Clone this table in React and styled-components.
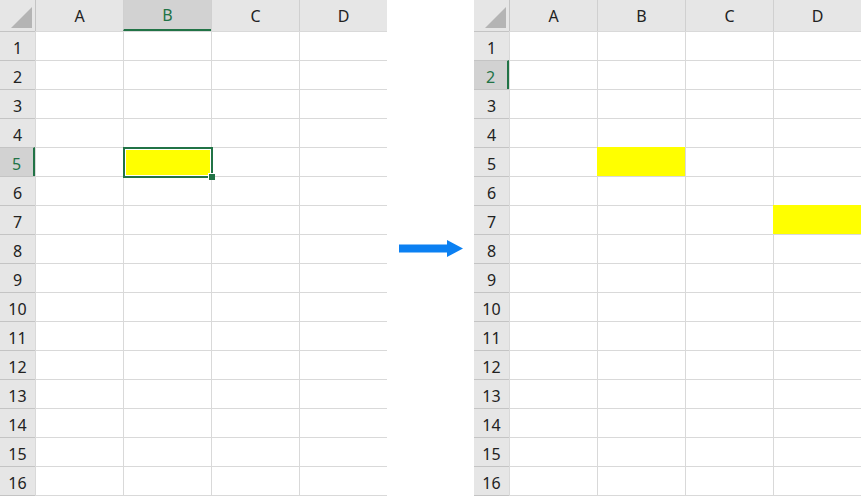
import styled, { createGlobalStyle } from "styled-components";

const Global = createGlobalStyle`
  html, body {
    margin: 0;
    padding: 0;
    background: #fff;
  }
  body {
    font-family: "Segoe UI", "Noto Sans", "Open Sans", sans-serif;
  }
`;

const COLS = ["A", "B", "C", "D"];
const ROWS = Array.from({ length: 16 }, (_, i) => i + 1);

const Page = styled.div`
  display: flex;
  align-items: center;
  width: 861px;
  height: 497px;
  overflow: hidden;
`;

const Sheet = styled.div`
  display: grid;
  grid-template-columns: 35px repeat(4, 88px);
  grid-template-rows: 31px repeat(16, 29px) 1px;
  align-self: flex-start;
  flex-shrink: 0;
`;

const Corner = styled.div`
  position: relative;
  background: #e6e6e6;

  &::after {
    content: "";
    position: absolute;
    right: 3px;
    bottom: 3px;
    width: 21px;
    height: 21px;
    background: #b4b4b4;
    clip-path: polygon(100% 0, 100% 100%, 0 100%);
  }
`;

const ColHead = styled.div`
  box-sizing: border-box;
  display: flex;
  align-items: center;
  justify-content: center;
  font-size: 16px;
  background: ${(p) => (p.$active ? "#d2d2d2" : "#e6e6e6")};
  color: ${(p) => (p.$active ? "#217346" : "#222")};
  border-left: 1px solid ${(p) => (p.$first ? "#c4c4c4" : "#d0d0d0")};
  border-bottom: ${(p) => (p.$active ? "2px solid #217346" : "0")};
`;

const RowHead = styled.div`
  box-sizing: border-box;
  display: flex;
  align-items: center;
  justify-content: center;
  padding-top: 3px;
  font-size: 16px;
  background: ${(p) => (p.$active ? "#d2d2d2" : "#e6e6e6")};
  color: ${(p) => (p.$active ? "#217346" : "#222")};
  border-top: 1px solid #c4c4c4;
  border-right: ${(p) => (p.$active ? "2px solid #217346" : "0")};
`;

const Cell = styled.div`
  position: relative;
  box-sizing: border-box;
  background: ${(p) => (p.$fill ? "#ffff00" : "#fff")};
  border-left: 1px solid ${(p) => (p.$fill ? "#ffff00" : "#d9d9d9")};
  border-top: 1px solid ${(p) => (p.$fill ? "#ffff00" : "#d9d9d9")};
`;

const BottomEdge = styled.div`
  grid-column: 1 / -1;
  background: linear-gradient(to right, #c4c4c4 35px, #d9d9d9 35px);
`;

const Selection = styled.div`
  position: absolute;
  top: -1px;
  left: -1px;
  right: -2px;
  bottom: -2px;
  border: 2px solid #217346;
  box-shadow: inset 0 0 0 1px #fff;
  pointer-events: none;
  z-index: 1;
`;

const Handle = styled.div`
  position: absolute;
  right: -4px;
  bottom: -4px;
  width: 6px;
  height: 6px;
  background: #217346;
  border: 1px solid #fff;
  border-right: 0;
  border-bottom: 0;
`;

const ArrowBox = styled.div`
  width: 87px;
  display: flex;
  justify-content: center;
  flex-shrink: 0;
`;

function Spreadsheet({ activeCol, activeRow, filled = [], selected }) {
  return (
    <Sheet>
      <Corner />
      {COLS.map((c, i) => (
        <ColHead key={c} $first={i === 0} $active={c === activeCol}>
          {c}
        </ColHead>
      ))}
      {ROWS.flatMap((r) => [
        <RowHead key={`h${r}`} $active={r === activeRow}>
          {r}
        </RowHead>,
        ...COLS.map((c) => {
          const id = `${c}${r}`;
          return (
            <Cell key={id} $fill={filled.includes(id)}>
              {selected === id && (
                <Selection>
                  <Handle />
                </Selection>
              )}
            </Cell>
          );
        }),
      ])}
      <BottomEdge />
    </Sheet>
  );
}

export default function App() {
  return (
    <>
      <Global />
      <Page>
        <Spreadsheet activeCol="B" activeRow={5} filled={["B5"]} selected="B5" />
        <ArrowBox>
          <svg width="64" height="17" viewBox="0 0 64 17">
            <path d="M0 4.5H48V0L64 8.5L48 17V12.5H0Z" fill="#0b80f2" />
          </svg>
        </ArrowBox>
        <Spreadsheet activeRow={2} filled={["B5", "D7"]} />
      </Page>
    </>
  );
}
